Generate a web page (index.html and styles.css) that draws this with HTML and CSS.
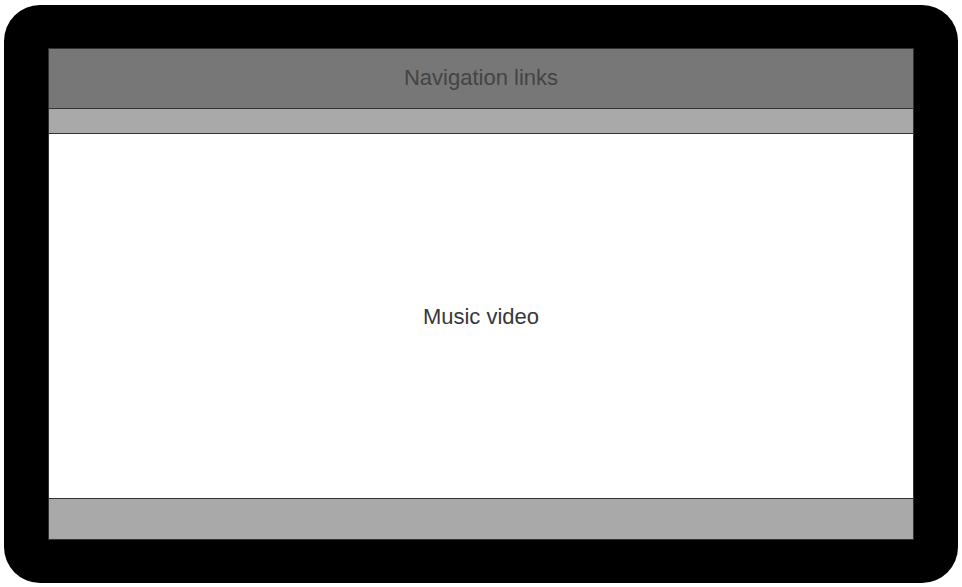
FILE: index.html
```html
<!DOCTYPE html>
<html>
<head>
<meta charset="utf-8">
<link rel="stylesheet" href="styles.css">
</head>
<body>
<div class="device">
  <div class="screen">
    <div class="nav">Navigation links</div>
    <div class="subbar"></div>
    <div class="video">Music video</div>
    <div class="footer"></div>
  </div>
</div>
</body>
</html>
```
FILE: styles.css
```css
html, body {
  margin: 0;
  padding: 0;
  background: #ffffff;
}
body {
  font-family: "Liberation Sans", Arial, sans-serif;
}
.device {
  box-sizing: border-box;
  margin: 5px 0 0 4px;
  width: 954px;
  height: 578px;
  background: #000000;
  border-radius: 36px;
  padding: 43px 44px;
}
.screen {
  box-sizing: border-box;
  height: 492px;
  border: 1px solid #333333;
  display: flex;
  flex-direction: column;
  background: #ffffff;
}
.nav {
  box-sizing: border-box;
  height: 59px;
  padding-bottom: 2px;
  background: #777777;
  color: #444444;
  font-size: 22px;
  display: flex;
  align-items: center;
  justify-content: center;
}
.subbar {
  box-sizing: border-box;
  height: 25px;
  background: #a9a9a9;
  border-top: 1px solid #333333;
}
.video {
  box-sizing: border-box;
  flex: 1;
  padding-top: 2px;
  border-top: 1px solid #333333;
  background: #ffffff;
  color: #383838;
  font-size: 22px;
  display: flex;
  align-items: center;
  justify-content: center;
}
.footer {
  box-sizing: border-box;
  height: 41px;
  background: #a9a9a9;
  border-top: 1px solid #333333;
}
```
